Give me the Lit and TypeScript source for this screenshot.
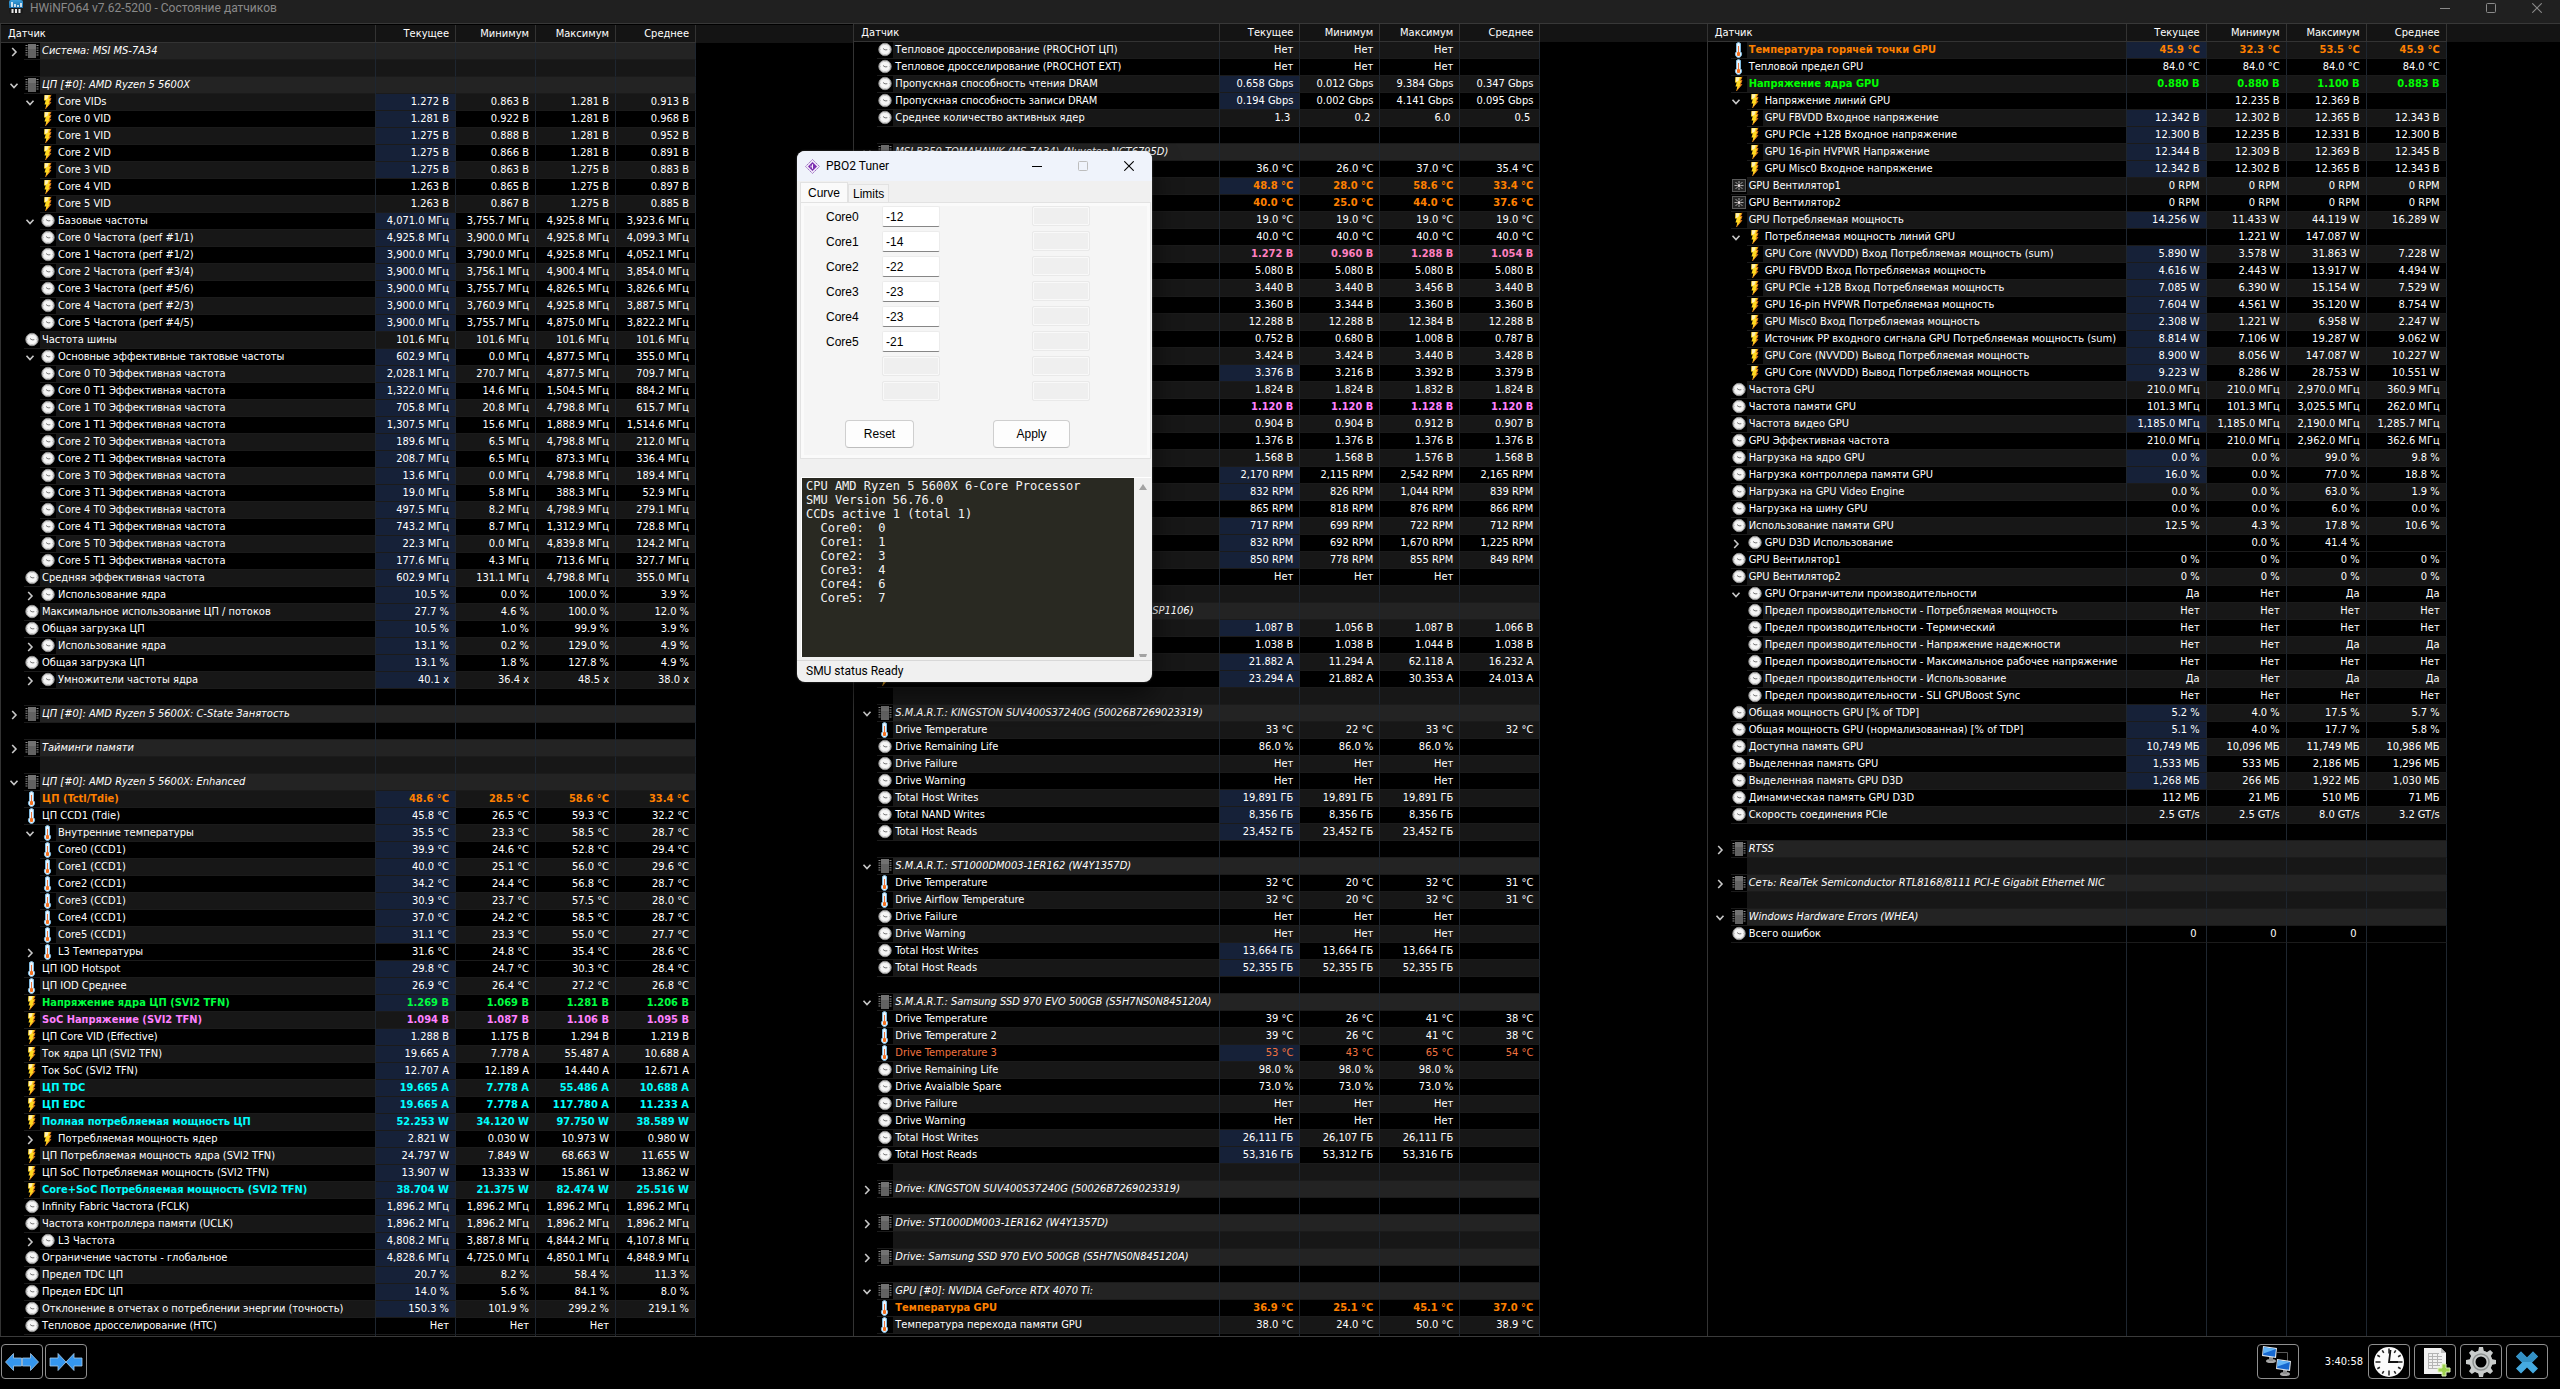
import { LitElement, html, css, svg, nothing } from "lit";
import { customElement, property } from "lit/decorators.js";
import { classMap } from "lit/directives/class-map.js";
import { styleMap } from "lit/directives/style-map.js";

/*
 * Sensor lists, one line per row:
 *   0<twisty>|name                 section
 *   _<stripe>                      spacer
 *   <level><twisty><icon><stripe>[*][colour]|name|current|min|max|average
 * twisty: v open, > closed, - none.  stripe: g grey, b black.
 * icon: z bolt, c clock, t thermometer, f fan.  * marks a changing value.
 */
const CPU = `0>|Система: MSI MS-7A34
_g
0v|ЦП [#0]: AMD Ryzen 5 5600X
2vzg*|Core VIDs|1.272 В|0.863 В|1.281 В|0.913 В
2-zb*|Core 0 VID|1.281 В|0.922 В|1.281 В|0.968 В
2-zg*|Core 1 VID|1.275 В|0.888 В|1.281 В|0.952 В
2-zb*|Core 2 VID|1.275 В|0.866 В|1.281 В|0.891 В
2-zg*|Core 3 VID|1.275 В|0.863 В|1.275 В|0.883 В
2-zb|Core 4 VID|1.263 В|0.865 В|1.275 В|0.897 В
2-zg|Core 5 VID|1.263 В|0.867 В|1.275 В|0.885 В
2vcb*|Базовые частоты|4,071.0 МГц|3,755.7 МГц|4,925.8 МГц|3,923.6 МГц
2-cg*|Core 0 Частота (perf #1/1)|4,925.8 МГц|3,900.0 МГц|4,925.8 МГц|4,099.3 МГц
2-cb*|Core 1 Частота (perf #1/2)|3,900.0 МГц|3,790.0 МГц|4,925.8 МГц|4,052.1 МГц
2-cg*|Core 2 Частота (perf #3/4)|3,900.0 МГц|3,756.1 МГц|4,900.4 МГц|3,854.0 МГц
2-cb*|Core 3 Частота (perf #5/6)|3,900.0 МГц|3,755.7 МГц|4,826.5 МГц|3,826.6 МГц
2-cg*|Core 4 Частота (perf #2/3)|3,900.0 МГц|3,760.9 МГц|4,925.8 МГц|3,887.5 МГц
2-cb*|Core 5 Частота (perf #4/5)|3,900.0 МГц|3,755.7 МГц|4,875.0 МГц|3,822.2 МГц
1-cg|Частота шины|101.6 МГц|101.6 МГц|101.6 МГц|101.6 МГц
2vcb*|Основные эффективные тактовые частоты|602.9 МГц|0.0 МГц|4,877.5 МГц|355.0 МГц
2-cg*|Core 0 T0 Эффективная частота|2,028.1 МГц|270.7 МГц|4,877.5 МГц|709.7 МГц
2-cb*|Core 0 T1 Эффективная частота|1,322.0 МГц|14.6 МГц|1,504.5 МГц|884.2 МГц
2-cg*|Core 1 T0 Эффективная частота|705.8 МГц|20.8 МГц|4,798.8 МГц|615.7 МГц
2-cb*|Core 1 T1 Эффективная частота|1,307.5 МГц|15.6 МГц|1,888.9 МГц|1,514.6 МГц
2-cg*|Core 2 T0 Эффективная частота|189.6 МГц|6.5 МГц|4,798.8 МГц|212.0 МГц
2-cb*|Core 2 T1 Эффективная частота|208.7 МГц|6.5 МГц|873.3 МГц|336.4 МГц
2-cg*|Core 3 T0 Эффективная частота|13.6 МГц|0.0 МГц|4,798.8 МГц|189.4 МГц
2-cb*|Core 3 T1 Эффективная частота|19.0 МГц|5.8 МГц|388.3 МГц|52.9 МГц
2-cg*|Core 4 T0 Эффективная частота|497.5 МГц|8.2 МГц|4,798.9 МГц|279.1 МГц
2-cb*|Core 4 T1 Эффективная частота|743.2 МГц|8.7 МГц|1,312.9 МГц|728.8 МГц
2-cg*|Core 5 T0 Эффективная частота|22.3 МГц|0.0 МГц|4,839.8 МГц|124.2 МГц
2-cb*|Core 5 T1 Эффективная частота|177.6 МГц|4.3 МГц|713.6 МГц|327.7 МГц
1-cg*|Средняя эффективная частота|602.9 МГц|131.1 МГц|4,798.8 МГц|355.0 МГц
2>cb*|Использование ядра|10.5 %|0.0 %|100.0 %|3.9 %
1-cg*|Максимальное использование ЦП / потоков|27.7 %|4.6 %|100.0 %|12.0 %
1-cb*|Общая загрузка ЦП|10.5 %|1.0 %|99.9 %|3.9 %
2>cg*|Использование ядра|13.1 %|0.2 %|129.0 %|4.9 %
1-cb*|Общая загрузка ЦП|13.1 %|1.8 %|127.8 %|4.9 %
2>cg*|Умножители частоты ядра|40.1 x|36.4 x|48.5 x|38.0 x
_b
0>|ЦП [#0]: AMD Ryzen 5 5600X: C-State Занятость
_b
0>|Тайминги памяти
_g
0v|ЦП [#0]: AMD Ryzen 5 5600X: Enhanced
1-tg*o|ЦП (Tctl/Tdie)|48.6 °C|28.5 °C|58.6 °C|33.4 °C
1-tb*|ЦП CCD1 (Tdie)|45.8 °C|26.5 °C|59.3 °C|32.2 °C
2vtg*|Внутренние температуры|35.5 °C|23.3 °C|58.5 °C|28.7 °C
2-tb*|Core0 (CCD1)|39.9 °C|24.6 °C|52.8 °C|29.4 °C
2-tg*|Core1 (CCD1)|40.0 °C|25.1 °C|56.0 °C|29.6 °C
2-tb*|Core2 (CCD1)|34.2 °C|24.4 °C|56.8 °C|28.7 °C
2-tg*|Core3 (CCD1)|30.9 °C|23.7 °C|57.5 °C|28.0 °C
2-tb*|Core4 (CCD1)|37.0 °C|24.2 °C|58.5 °C|28.7 °C
2-tg*|Core5 (CCD1)|31.1 °C|23.3 °C|55.0 °C|27.7 °C
2>tb|L3 Температуры|31.6 °C|24.8 °C|35.4 °C|28.6 °C
1-tb*|ЦП IOD Hotspot|29.8 °C|24.7 °C|30.3 °C|28.4 °C
1-tg*|ЦП IOD Среднее|26.9 °C|26.4 °C|27.2 °C|26.8 °C
1-zb*n|Напряжение ядра ЦП (SVI2 TFN)|1.269 В|1.069 В|1.281 В|1.206 В
1-zgm|SoC Напряжение (SVI2 TFN)|1.094 В|1.087 В|1.106 В|1.095 В
1-zb*|ЦП Core VID (Effective)|1.288 В|1.175 В|1.294 В|1.219 В
1-zg*|Ток ядра ЦП (SVI2 TFN)|19.665 A|7.778 A|55.487 A|10.688 A
1-zb*|Ток SoC (SVI2 TFN)|12.707 A|12.189 A|14.440 A|12.671 A
1-zg*c|ЦП TDC|19.665 A|7.778 A|55.486 A|10.688 A
1-zb*c|ЦП EDC|19.665 A|7.778 A|117.780 A|11.233 A
1-zg*c|Полная потребляемая мощность ЦП|52.253 W|34.120 W|97.750 W|38.589 W
2>zb*|Потребляемая мощность ядер|2.821 W|0.030 W|10.973 W|0.980 W
1-zg*|ЦП Потребляемая мощность ядра (SVI2 TFN)|24.797 W|7.849 W|68.663 W|11.655 W
1-zb*|ЦП SoC Потребляемая мощность (SVI2 TFN)|13.907 W|13.333 W|15.861 W|13.862 W
1-zg*c|Core+SoC Потребляемая мощность (SVI2 TFN)|38.704 W|21.375 W|82.474 W|25.516 W
1-cb*|Infinity Fabric Частота (FCLK)|1,896.2 МГц|1,896.2 МГц|1,896.2 МГц|1,896.2 МГц
1-cg*|Частота контроллера памяти (UCLK)|1,896.2 МГц|1,896.2 МГц|1,896.2 МГц|1,896.2 МГц
2>cb*|L3 Частота|4,808.2 МГц|3,887.8 МГц|4,844.2 МГц|4,107.8 МГц
1-cb*|Ограничение частоты - глобальное|4,828.6 МГц|4,725.0 МГц|4,850.1 МГц|4,848.9 МГц
1-cg*|Предел TDC ЦП|20.7 %|8.2 %|58.4 %|11.3 %
1-cb*|Предел EDC ЦП|14.0 %|5.6 %|84.1 %|8.0 %
1-cg*|Отклонение в отчетах о потреблении энергии (точность)|150.3 %|101.9 %|299.2 %|219.1 %
1-cb|Тепловое дросселирование (HTC)|Нет|Нет|Нет|`;

const BOARD = `1-cg|Тепловое дросселирование (PROCHOT ЦП)|Нет|Нет|Нет|
1-cb|Тепловое дросселирование (PROCHOT EXT)|Нет|Нет|Нет|
1-cg*|Пропускная способность чтения DRAM|0.658 Gbps|0.012 Gbps|9.384 Gbps|0.347 Gbps
1-cb*|Пропускная способность записи DRAM|0.194 Gbps|0.002 Gbps|4.141 Gbps|0.095 Gbps
1-cg|Среднее количество активных ядер|1.3\u00a0|0.2\u00a0|6.0\u00a0|0.5\u00a0
_b
0v|MSI B350 TOMAHAWK (MS-7A34) (Nuvoton NCT6795D)
1-tb||36.0 °C|26.0 °C|37.0 °C|35.4 °C
1-tg*o||48.8 °C|28.0 °C|58.6 °C|33.4 °C
1-tbo||40.0 °C|25.0 °C|44.0 °C|37.6 °C
1-tg||19.0 °C|19.0 °C|19.0 °C|19.0 °C
1-tb||40.0 °C|40.0 °C|40.0 °C|40.0 °C
1-zgp||1.272 В|0.960 В|1.288 В|1.054 В
1-zb||5.080 В|5.080 В|5.080 В|5.080 В
1-zg||3.440 В|3.440 В|3.456 В|3.440 В
1-zb||3.360 В|3.344 В|3.360 В|3.360 В
1-zg||12.288 В|12.288 В|12.384 В|12.288 В
1-zb||0.752 В|0.680 В|1.008 В|0.787 В
1-zg||3.424 В|3.424 В|3.440 В|3.428 В
1-zb*||3.376 В|3.216 В|3.392 В|3.379 В
1-zg||1.824 В|1.824 В|1.832 В|1.824 В
1-zbm||1.120 В|1.120 В|1.128 В|1.120 В
1-zg||0.904 В|0.904 В|0.912 В|0.907 В
1-zb||1.376 В|1.376 В|1.376 В|1.376 В
1-zg||1.568 В|1.568 В|1.576 В|1.568 В
1-fb*||2,170 RPM|2,115 RPM|2,542 RPM|2,165 RPM
1-fg*||832 RPM|826 RPM|1,044 RPM|839 RPM
1-fb||865 RPM|818 RPM|876 RPM|866 RPM
1-fg*||717 RPM|699 RPM|722 RPM|712 RPM
1-fb*||832 RPM|692 RPM|1,670 RPM|1,225 RPM
1-fg*||850 RPM|778 RPM|855 RPM|849 RPM
1-cb||Нет|Нет|Нет|
_g
0v|MSI B350 TOMAHAWK (MS-7A34) (uPI uP9505PQ / ASP1106)
1-zg*||1.087 В|1.056 В|1.087 В|1.066 В
1-zb||1.038 В|1.038 В|1.044 В|1.038 В
1-zg*||21.882 A|11.294 A|62.118 A|16.232 A
1-zb*|AC Ток|23.294 A|21.882 A|30.353 A|24.013 A
_g
0v|S.M.A.R.T.: KINGSTON SUV400S37240G (50026B7269023319)
1-tg|Drive Temperature|33 °C|22 °C|33 °C|32 °C
1-cb|Drive Remaining Life|86.0 %|86.0 %|86.0 %|
1-cg|Drive Failure|Нет|Нет|Нет|
1-cb|Drive Warning|Нет|Нет|Нет|
1-cg*|Total Host Writes|19,891 ГБ|19,891 ГБ|19,891 ГБ|
1-cb*|Total NAND Writes|8,356 ГБ|8,356 ГБ|8,356 ГБ|
1-cg*|Total Host Reads|23,452 ГБ|23,452 ГБ|23,452 ГБ|
_b
0v|S.M.A.R.T.: ST1000DM003-1ER162 (W4Y1357D)
1-tb|Drive Temperature|32 °C|20 °C|32 °C|31 °C
1-tg|Drive Airflow Temperature|32 °C|20 °C|32 °C|31 °C
1-cb|Drive Failure|Нет|Нет|Нет|
1-cg|Drive Warning|Нет|Нет|Нет|
1-cb*|Total Host Writes|13,664 ГБ|13,664 ГБ|13,664 ГБ|
1-cg*|Total Host Reads|52,355 ГБ|52,355 ГБ|52,355 ГБ|
_b
0v|S.M.A.R.T.: Samsung SSD 970 EVO 500GB (S5H7NS0N845120A)
1-tb|Drive Temperature|39 °C|26 °C|41 °C|38 °C
1-tg|Drive Temperature 2|39 °C|26 °C|41 °C|38 °C
1-tb*r|Drive Temperature 3|53 °C|43 °C|65 °C|54 °C
1-cg|Drive Remaining Life|98.0 %|98.0 %|98.0 %|
1-cb|Drive Avaialble Spare|73.0 %|73.0 %|73.0 %|
1-cg|Drive Failure|Нет|Нет|Нет|
1-cb|Drive Warning|Нет|Нет|Нет|
1-cg*|Total Host Writes|26,111 ГБ|26,107 ГБ|26,111 ГБ|
1-cb*|Total Host Reads|53,316 ГБ|53,312 ГБ|53,316 ГБ|
_g
0>|Drive: KINGSTON SUV400S37240G (50026B7269023319)
_b
0>|Drive: ST1000DM003-1ER162 (W4Y1357D)
_g
0>|Drive: Samsung SSD 970 EVO 500GB (S5H7NS0N845120A)
_b
0v|GPU [#0]: NVIDIA GeForce RTX 4070 Ti:
1-tbo|Температура GPU|36.9 °C|25.1 °C|45.1 °C|37.0 °C
1-tg|Температура перехода памяти GPU|38.0 °C|24.0 °C|50.0 °C|38.9 °C`;

const GPU = `1-tg*o|Температура горячей точки GPU|45.9 °C|32.3 °C|53.5 °C|45.9 °C
1-tb|Тепловой предел GPU|84.0 °C|84.0 °C|84.0 °C|84.0 °C
1-zgl|Напряжение ядра GPU|0.880 В|0.880 В|1.100 В|0.883 В
2vzb|Напряжение линий GPU||12.235 В|12.369 В|
2-zg*|GPU FBVDD Входное напряжение|12.342 В|12.302 В|12.365 В|12.343 В
2-zb*|GPU PCIe +12В Входное напряжение|12.300 В|12.235 В|12.331 В|12.300 В
2-zg*|GPU 16-pin HVPWR Напряжение|12.344 В|12.309 В|12.369 В|12.345 В
2-zb*|GPU Misc0 Входное напряжение|12.342 В|12.302 В|12.365 В|12.343 В
1-fg|GPU Вентилятор1|0 RPM|0 RPM|0 RPM|0 RPM
1-fb|GPU Вентилятор2|0 RPM|0 RPM|0 RPM|0 RPM
1-zg*|GPU Потребляемая мощность|14.256 W|11.433 W|44.119 W|16.289 W
2vzb|Потребляемая мощность линий GPU||1.221 W|147.087 W|
2-zg*|GPU Core (NVVDD) Вход Потребляемая мощность (sum)|5.890 W|3.578 W|31.863 W|7.228 W
2-zb*|GPU FBVDD Вход Потребляемая мощность|4.616 W|2.443 W|13.917 W|4.494 W
2-zg*|GPU PCIe +12В Вход Потребляемая мощность|7.085 W|6.390 W|15.154 W|7.529 W
2-zb*|GPU 16-pin HVPWR Потребляемая мощность|7.604 W|4.561 W|35.120 W|8.754 W
2-zg*|GPU Misc0 Вход Потребляемая мощность|2.308 W|1.221 W|6.958 W|2.247 W
2-zb*|Источник PP входного сигнала GPU Потребляемая мощность (sum)|8.814 W|7.106 W|19.287 W|9.062 W
2-zg*|GPU Core (NVVDD) Вывод Потребляемая мощность|8.900 W|8.056 W|147.087 W|10.227 W
2-zb*|GPU Core (NVVDD) Вывод Потребляемая мощность|9.223 W|8.286 W|28.753 W|10.551 W
1-cg|Частота GPU|210.0 МГц|210.0 МГц|2,970.0 МГц|360.9 МГц
1-cb|Частота памяти GPU|101.3 МГц|101.3 МГц|3,025.5 МГц|262.0 МГц
1-cg*|Частота видео GPU|1,185.0 МГц|1,185.0 МГц|2,190.0 МГц|1,285.7 МГц
1-cb|GPU Эффективная частота|210.0 МГц|210.0 МГц|2,962.0 МГц|362.6 МГц
1-cg*|Нагрузка на ядро GPU|0.0 %|0.0 %|99.0 %|9.8 %
1-cb*|Нагрузка контроллера памяти GPU|16.0 %|0.0 %|77.0 %|18.8 %
1-cg|Нагрузка на GPU Video Engine|0.0 %|0.0 %|63.0 %|1.9 %
1-cb|Нагрузка на шину GPU|0.0 %|0.0 %|6.0 %|0.0 %
1-cg|Использование памяти GPU|12.5 %|4.3 %|17.8 %|10.6 %
2>cb|GPU D3D Использование||0.0 %|41.4 %|
1-cb|GPU Вентилятор1|0 %|0 %|0 %|0 %
1-cg|GPU Вентилятор2|0 %|0 %|0 %|0 %
2vcb|GPU Ограничители производительности|Да|Нет|Да|Да
2-cg|Предел производительности - Потребляемая мощность|Нет|Нет|Нет|Нет
2-cb|Предел производительности - Термический|Нет|Нет|Нет|Нет
2-cg|Предел производительности - Напряжение надежности|Нет|Нет|Да|Да
2-cb|Предел производительности - Максимальное рабочее напряжение|Нет|Нет|Нет|Нет
2-cg|Предел производительности - Использование|Да|Нет|Да|Да
2-cb|Предел производительности - SLI GPUBoost Sync|Нет|Нет|Нет|Нет
1-cg*|Общая мощность GPU [% of TDP]|5.2 %|4.0 %|17.5 %|5.7 %
1-cb*|Общая мощность GPU (нормализованная) [% of TDP]|5.1 %|4.0 %|17.7 %|5.8 %
1-cg*|Доступна память GPU|10,749 МБ|10,096 МБ|11,749 МБ|10,986 МБ
1-cb*|Выделенная память GPU|1,533 МБ|533 МБ|2,186 МБ|1,296 МБ
1-cg*|Выделенная память GPU D3D|1,268 МБ|266 МБ|1,922 МБ|1,030 МБ
1-cb|Динамическая память GPU D3D|112 МБ|21 МБ|510 МБ|71 МБ
1-cg|Скорость соединения PCIe|2.5 GT/s|2.5 GT/s|8.0 GT/s|3.2 GT/s
_b
0>|RTSS
_g
0>|Сеть: RealTek Semiconductor RTL8168/8111 PCI-E Gigabit Ethernet NIC
_g
0v|Windows Hardware Errors (WHEA)
1-cb|Всего ошибок|0\u00a0|0\u00a0|0\u00a0|`;

const PALETTE: Record<string, string> = {
  o: "orange", n: "green", l: "lime", m: "magenta", p: "pink", c: "cyan", r: "coral",
};

const bolt = svg`<svg viewBox="0 0 16 16" width="16" height="16">
  <path d="M4.5 1H11L9.500 4.500h1.600L9.300 8.500h1.400L5.300 15l1-4.500H4.500l1.200-4H4z" fill="#ffd820"/>
  <path d="M4.700 1.300h4L7.300 5 5 6z" fill="#fff1b8"/>
  <path d="M11 .8 9.300 4.500h1.700L9.200 8.500h1.600L5.400 15" stroke="#d9741a" fill="none"/></svg>`;
const clock = svg`<svg viewBox="0 0 16 16" width="16" height="16">
  <circle cx="8" cy="7.500" r="6.200" fill="#dcdcdc" stroke="#8c8c8c"/><circle cx="8" cy="7.500" r="4.600" fill="#f6f6f6"/>
  <path d="M6 6.500 8 7.900l2.300-.2" stroke="#777" fill="none"/><path d="M8 2v1M8 12v1M2.600 7.500h1M12.400 7.500h1" stroke="#b4b4b4"/></svg>`;
const thermo = svg`<svg viewBox="0 0 16 16" width="16" height="16">
  <path d="M5.500 1.500q2-2 4 0v8.200q1.600 1.200 1 3.300-.8 2.500-3 2.500T4.500 13q-.6-2 1-3.300z" fill="#e8f5ff" stroke="#7fbce2"/>
  <path d="M7.500 4v7" stroke="#e8743c"/><rect x="6" y="10" width="3" height="4" rx="1" fill="#f4701e"/></svg>`;
const fan = svg`<svg viewBox="0 0 16 16" width="16" height="16">
  <rect x="1.500" y="1.500" width="13" height="12" fill="#242424" stroke="#5a5a5a"/>
  <path d="M8 3v2.500M8 9.500V12M3.500 7.500H6M10 7.500h2.500M4.500 4l2 2M11.500 4l-2 2M4.500 11l2-2M11.500 11l-2-2" stroke="#a8a8a8"/><circle cx="8" cy="7.500" r="1.500" fill="#e8dede"/></svg>`;
const chip = svg`<svg viewBox="0 0 16 16" width="16" height="16">
  <path d="M2.500 2v12M13.500 2v12" stroke="#8c8c8c" stroke-dasharray="1 1.400" stroke-width="2"/>
  <rect x="4" y="1" width="8" height="14" fill="#626262"/><rect x="4" y="1" width="8" height="5" fill="#727272"/></svg>`;
const ICONS: Record<string, unknown> = { z: bolt, c: clock, t: thermo, f: fan };

const twistyOpen = svg`<svg viewBox="0 0 10 10" width="10" height="10"><path d="M1.500 2.800 5 6.600l3.500-3.800" fill="none" stroke="#c8c8c8" stroke-width="1.600"/></svg>`;
const twistyClosed = svg`<svg viewBox="0 0 10 10" width="10" height="10"><path d="M3.200 1 7 5 3.200 9" fill="none" stroke="#c8c8c8" stroke-width="1.600"/></svg>`;

@customElement("sensor-list")
class SensorList extends LitElement {
  @property() rows = "";
  @property({ type: Number }) nameWidth = 376;

  static styles = css`
    :host { display: grid; min-width: 0; border-left: 1px solid #333; font-family: "DejaVu Sans Condensed", Tahoma, sans-serif; font-size: 11px; color: #fff; }
    table { width: 100%; height: 100%; table-layout: fixed; border-collapse: separate; border-spacing: 0; background: #000; }
    .value { width: 80px; }
    th, td { padding: 0; white-space: nowrap; overflow: hidden; }
    th { height: 17px; background: #141414; border-right: 1px solid #333; border-bottom: 1px solid #333; text-align: right; padding-right: 6px; line-height: 16px; font-weight: normal; }
    th:first-child { text-align: left; padding: 0 0 0 7px; }
    th:last-child { border: 0; padding: 0; }
    td { height: 16px; line-height: 16px; border-right: 1px solid #1e2630; border-bottom: 1px solid #1b1b1b; text-align: right; padding-right: 6px; }
    td:first-child { height: 17px; padding: 0; border-bottom: 0; text-align: left; }
    td:last-child { border: 0; padding: 0; }
    .grey td, .grey .name { background: #171717; }
    .section td, .section .name { background: #232323; }
    .section .name { font-style: italic; }
    .live td:nth-child(2) { background: #162138; }
    tr td:first-child, tr td:last-child { background: #000; }
    .fill td { height: auto; border-bottom: 0; }
    .tree { display: flex; height: 17px; }
    .step { flex: none; width: 2px; }
    .deep { width: 18px; }
    .twisty { flex: none; width: 21px; height: 17px; padding: 0; border: 0; background: none; display: flex; align-items: center; justify-content: center; }
    .icon { flex: none; width: 16px; height: 16px; border-bottom: 1px solid #1b1b1b; }
    .icon svg { display: block; }
    .name { flex: 1; min-width: 0; height: 16px; padding-left: 2px; border-bottom: 1px solid #1b1b1b; overflow: hidden; }
    .orange, .green, .lime, .magenta, .pink, .cyan { font-weight: bold; }
    .orange { color: #ff8000; }
    .green { color: #00ff40; }
    .lime { color: #00ff00; }
    .magenta { color: #ff80ff; }
    .pink { color: #ff80c0; }
    .cyan { color: #00ffff; }
    .coral { color: #f27441; }
  `;

  private row(line: string) {
    const [flags, name = "", ...values] = line.split("|");
    const blank = flags[0] === "_";
    const section = flags[0] === "0";
    const stripe = blank ? flags[1] : flags[3];
    const extra = flags.slice(4);
    const colour = PALETTE[extra.replace("*", "")];
    const classes = {
      section,
      grey: stripe === "g",
      live: extra.includes("*"),
      ...(colour ? { [colour]: true } : {}),
    };
    const twisty = flags[1];
    return html`<tr class=${classMap(classes)}>
      <td><div class="tree">
        <span class=${classMap({ step: true, deep: flags[0] === "2" })}></span>
        ${!blank && (twisty === "v" || twisty === ">")
          ? html`<button class="twisty" aria-expanded=${twisty === "v"} aria-label=${name}>${twisty === "v" ? twistyOpen : twistyClosed}</button>`
          : html`<span class="twisty"></span>`}
        <span class="icon">${blank ? nothing : section ? chip : ICONS[flags[2]]}</span>
        <span class="name">${name}</span>
      </div></td>
      ${[0, 1, 2, 3].map((i) => html`<td>${values[i] ?? ""}</td>`)}
      <td></td>
    </tr>`;
  }

  render() {
    return html`<table>
      <colgroup>
        <col style=${styleMap({ width: `${this.nameWidth}px` })}>
        <col class="value"><col class="value"><col class="value"><col class="value"><col>
      </colgroup>
      <thead><tr><th>Датчик</th><th>Текущее</th><th>Минимум</th><th>Максимум</th><th>Среднее</th><th></th></tr></thead>
      <tbody>
        ${this.rows.split("\n").map((line) => this.row(line))}
        <tr class="fill"><td></td><td></td><td></td><td></td><td></td><td></td></tr>
      </tbody>
    </table>`;
  }
}

const OFFSETS = ["-12", "-14", "-22", "-23", "-23", "-21"];
const LOG = `CPU AMD Ryzen 5 5600X 6-Core Processor
SMU Version 56.76.0
CCDs active 1 (total 1)
  Core0:  0
  Core1:  1
  Core2:  3
  Core3:  4
  Core4:  6
  Core5:  7`;

const minimise = svg`<svg viewBox="0 0 10 10" width="10" height="10"><path d="M0 5.500h10" stroke="currentColor"/></svg>`;
const maximise = svg`<svg viewBox="0 0 10 10" width="10" height="10"><rect x=".5" y=".5" width="9" height="9" rx="1" fill="none" stroke="currentColor"/></svg>`;
const closeMark = svg`<svg viewBox="0 0 10 10" width="10" height="10"><path d="M.3.3l9.400 9.400M9.700.3.3 9.700" stroke="currentColor" stroke-width="1.100"/></svg>`;

@customElement("tuner-window")
class TunerWindow extends LitElement {
  static styles = css`
    :host { display: flex; flex-direction: column; width: 355px; border-radius: 8px; overflow: hidden; background: #f0f0f0; color: #000; font-family: "Liberation Sans", Arial, sans-serif; font-size: 12px; box-shadow: 0 0 2px #555, 0 12px 28px rgba(0, 0, 0, .6); }
    button, input, textarea { font: inherit; color: inherit; margin: 0; box-sizing: border-box; }
    .title { display: flex; height: 30px; align-items: center; background: #eff3fb; font-family: Roboto, "Segoe UI", sans-serif; }
    .title .logo { margin: 0 6px 0 8px; }
    .title .text { flex: 1; }
    .control { width: 46px; height: 30px; padding: 0; border: 0; background: none; display: flex; align-items: center; justify-content: center; }
    .control:disabled { color: #bdbdbd; }
    .tabs { display: flex; align-items: flex-end; height: 21px; padding-left: 3px; }
    .tab { height: 18px; padding: 0 4px; border: 1px solid #e2e2e2; border-bottom: 0; background: #f3f3f3; line-height: 16px; }
    .tab.on { height: 20px; padding: 0 7px; background: #fafafa; }
    .page { margin: 0 1px 0 3px; padding: 1px 0 10px; border: 1px solid #e2e2e2; background: #f5f5f5; box-shadow: inset 0 0 0 3px #fafafa; }
    .offsets { display: grid; grid-template-columns: 56px 58px 58px; row-gap: 4px; padding: 2px 0 0 25px; }
    .offsets input:nth-of-type(2n) { margin-left: 92px; }
    label, .spare { height: 21px; line-height: 23px; }
    .offsets input { width: 58px; height: 21px; padding: 0 0 0 3px; border: 1px solid #ececec; border-bottom-color: #868686; border-radius: 2px; background: #fff; }
    .offsets input:disabled { height: 20px; background: #efefef; border-color: #e9e9e9; box-shadow: inset 0 0 0 1px #f9f9f9; }
    .actions { display: flex; gap: 79px; padding: 18px 0 0 44px; }
    .action { width: 69px; height: 28px; border: 1px solid #cfcfcf; border-bottom-color: #bdbdbd; border-radius: 4px; background: #fdfdfd; }
    .action.wide { width: 77px; }
    .console { display: flex; margin: 18px 1px 0 4px; border-top: 1px solid #fff; border-left: 1px solid #fff; }
    textarea { flex: 1; height: 179px; padding: 1px 4px; border: 0; resize: none; overflow: hidden; background: #292922; color: #f2f2f2; font-family: "DejaVu Sans Mono", Consolas, monospace; font-size: 12px; line-height: 14px; outline: 0; white-space: pre; }
    .scroll { display: flex; flex-direction: column; justify-content: space-between; align-items: center; width: 17px; padding-top: 6px; box-sizing: border-box; }
    .scroll svg { display: block; }
    .status { margin-top: 3px; padding: 0 9px; height: 21px; line-height: 21px; border-top: 1px solid #d8d8d8; font-family: Roboto, "Segoe UI", sans-serif; }
  `;

  render() {
    return html`
      <div class="title">
        <svg class="logo" viewBox="0 0 16 16" width="15" height="15">
          <path d="M8 .5 15.500 8 8 15.500.5 8z" fill="#efe6f7" stroke="#9a6cc0" stroke-dasharray="2 .6"/>
          <path d="M8 3.200 12.800 8 8 12.800 3.200 8z" fill="#7b2fb0"/>
          <path d="M8 5.500v5M6.500 7v2" stroke="#fff"/></svg>
        <span class="text">PBO2 Tuner</span>
        <button class="control" aria-label="Minimize">${minimise}</button>
        <button class="control" aria-label="Maximize" disabled>${maximise}</button>
        <button class="control" aria-label="Close">${closeMark}</button>
      </div>
      <div class="tabs" role="tablist">
        <button class="tab on" role="tab" aria-selected="true">Curve</button>
        <button class="tab" role="tab" aria-selected="false">Limits</button>
      </div>
      <div class="page" role="tabpanel">
        <div class="offsets">
          ${[0, 1, 2, 3, 4, 5, 6, 7].map((i) => html`
            ${i < 6 ? html`<label for="core${i}">Core${i}</label>` : html`<span class="spare"></span>`}
            <input id="core${i}" aria-label=${`Core${i}`} .value=${OFFSETS[i] ?? ""} ?disabled=${i > 5}>
            <input aria-label=${`Core${i + 8}`} disabled>`)}
        </div>
        <div class="actions">
          <button class="action">Reset</button>
          <button class="action wide">Apply</button>
        </div>
      </div>
      <div class="console">
        <textarea readonly aria-label="Log" .value=${LOG}></textarea>
        <div class="scroll">
          <svg viewBox="0 0 8 6" width="8" height="6"><path d="M4 0 8 6H0z" fill="#a3a3a3"/></svg>
          <svg viewBox="0 0 8 3" width="8" height="3"><path d="M0 0h8L7 3H1z" fill="#a3a3a3"/></svg>
        </div>
      </div>
      <div class="status">SMU status Ready</div>`;
  }
}

const arrow = (x: number, dir: number) => svg`<path transform="translate(${x} 16) scale(${dir} 1)"
  d="M0 0-8-8.500v4.500h-8v8h8v4.500z" fill="#3496ee" stroke="#a9cdea" stroke-width=".8"/>`;
const spread = svg`<svg viewBox="0 0 36 32" width="36" height="32">${arrow(1.5, -1)}${arrow(34.5, 1)}</svg>`;
const gather = svg`<svg viewBox="0 0 36 32" width="36" height="32">${arrow(18, 1)}${arrow(18, -1)}</svg>`;
const screen = (x: number, y: number) => svg`<g transform="translate(${x} ${y})">
  <ellipse cx="9" cy="15" rx="5" ry="2" fill="#a8a8a8"/><path d="M7 10h4v5H7z" fill="#8c8c8c"/>
  <path d="M1 0 15 2 14 12 0 10z" fill="#dfe6ec"/><path d="M1.900 1.200 13.900 3 13 10.800 1.100 9z" fill="#1668d0"/>
  <path d="M1.900 1.200 13.900 3 1.500 7.500z" fill="#64b6f8"/></g>`;
const network = svg`<svg viewBox="0 0 32 32" width="32" height="32"><path d="M15 6.500h10.500V15" stroke="#5a5a5a" fill="none"/>${screen(0, 0)}${screen(14, 13)}</svg>`;
const ticks = Array.from({ length: 12 }, (_, i) => svg`<path d="M16 2.500v${i % 3 ? 3 : 5}" transform="rotate(${i * 30} 16 16)" stroke="#222" stroke-width="1.500"/>`);
const bigClock = svg`<svg viewBox="0 0 32 32" width="32" height="32"><circle cx="16" cy="16" r="15" fill="#fbfbfb"/>${ticks}
  <path d="M17.500 4 16 16h9" fill="none" stroke="#111" stroke-width="1.800"/></svg>`;
const sheet = svg`<svg viewBox="0 0 32 32" width="32" height="32">
  <path d="M5 2h17l5 5v21H5z" fill="#f1f1f1"/><path d="M22 2v5h5z" fill="#bdbdbd"/>
  <path d="M9 7.500h11M9 10.500h14M9 13.500h14M9 16.500h14M9 19.500h12M9 22.500h10M9.500 7v16M13.500 7v16M18.500 7v13" stroke="#b4b4b4" fill="none"/>
  <path d="M23 18h4v4h4v4h-4v4h-4v-4h-4v-4h4z" fill="#9fd150" stroke="#dff2bf"/></svg>`;
const teeth = Array.from({ length: 8 }, (_, i) => svg`<path d="M13 6 14 1h4l1 5z" transform="rotate(${i * 45} 16 16)" fill="#c9cccb"/>`);
const gear = svg`<svg viewBox="0 0 32 32" width="32" height="32">${teeth}<circle cx="16" cy="16" r="8.500" fill="none" stroke="#c9cccb" stroke-width="6"/>
  <circle cx="16" cy="16" r="8" fill="none" stroke="#8e9291" stroke-width="1.500"/></svg>`;
const cross = svg`<svg viewBox="0 0 32 32" width="32" height="32"><path d="M10 5.500 16 11.500l6-6 5 5-6 6 6 6-5 5-6-6-6 6-5-5 6-6-6-6z" fill="#45aae0"/>
  <path d="M10 5.500 16 11.500l6-6 5 5-5.500 5.500h-11L5 10.500z" fill="#3390c4"/></svg>`;

@customElement("app-root")
class AppRoot extends LitElement {
  static styles = css`
    :host { display: flex; flex-direction: column; position: relative; min-height: 100vh; background: #000; color: #fff; font-family: Roboto, "Segoe UI", sans-serif; font-size: 12px; }
    .title { display: flex; align-items: flex-start; height: 23px; background: #202020; color: #8a8a8a; border-bottom: 1px solid #383838; }
    .title .logo { margin: 0 7px 0 9px; }
    .title .text { flex: 1; line-height: 16px; }
    .control { width: 46px; height: 15px; padding: 0; border: 0; background: none; color: #8a8a8a; display: flex; align-items: center; justify-content: center; }
    main { flex: 1; display: grid; grid-template-columns: repeat(3, minmax(0, 1fr)); }
    .first { padding-top: 1px; }
    .bar { display: flex; align-items: flex-start; height: 53px; padding: 7px 12px 0 1px; border-top: 1px solid #3a3a3a; box-sizing: border-box; }
    .tool { width: 42px; height: 35px; padding: 0; border: 1px solid #8f8f8f; border-radius: 4px; background: #000; display: flex; align-items: center; justify-content: center; }
    .left, .right { display: flex; align-items: center; gap: 2px; }
    .right { margin-left: auto; gap: 4px; }
    time { width: 61px; text-align: right; font-family: "DejaVu Sans Condensed", Tahoma, sans-serif; font-size: 11px; padding-right: 1px; box-sizing: border-box; }
    .popup { position: absolute; left: 797px; top: 151px; }
  `;

  render() {
    return html`
      <header class="title">
        <svg class="logo" viewBox="0 0 14 14" width="14" height="14">
          <defs><linearGradient id="g" x1="0" y1="0" x2="0" y2="1"><stop offset="0" stop-color="#3aa0dc"/><stop offset=".55" stop-color="#1c6ea8"/><stop offset=".6" stop-color="#1a1a1a"/></linearGradient></defs>
          <rect width="14" height="14" rx="2" fill="url(#g)"/>
          <path d="M3 2v5M6 4v3M9 5v2M12 3v4" stroke="#fff" stroke-width="1.500"/><path d="M3.500 9v4M7 9v4M10.500 9v4" stroke="#e8e8e8" stroke-width="2"/></svg>
        <span class="text">HWiNFO64 v7.62-5200 - Состояние датчиков</span>
        <button class="control" aria-label="Minimize">${minimise}</button>
        <button class="control" aria-label="Maximize">${maximise}</button>
        <button class="control" aria-label="Close">${closeMark}</button>
      </header>
      <main>
        <sensor-list class="first" .rows=${CPU} .nameWidth=${375}></sensor-list>
        <sensor-list .rows=${BOARD} .nameWidth=${366}></sensor-list>
        <sensor-list .rows=${GPU} .nameWidth=${419}></sensor-list>
      </main>
      <footer class="bar">
        <div class="left">
          <button class="tool" aria-label="Expand columns">${spread}</button>
          <button class="tool" aria-label="Shrink columns">${gather}</button>
        </div>
        <div class="right">
          <button class="tool" aria-label="Network">${network}</button>
          <time>3:40:58</time>
          <button class="tool" aria-label="Clock">${bigClock}</button>
          <button class="tool" aria-label="Log to file">${sheet}</button>
          <button class="tool" aria-label="Settings">${gear}</button>
          <button class="tool" aria-label="Close sensors">${cross}</button>
        </div>
      </footer>
      <tuner-window class="popup" role="dialog" aria-label="PBO2 Tuner"></tuner-window>`;
  }
}
